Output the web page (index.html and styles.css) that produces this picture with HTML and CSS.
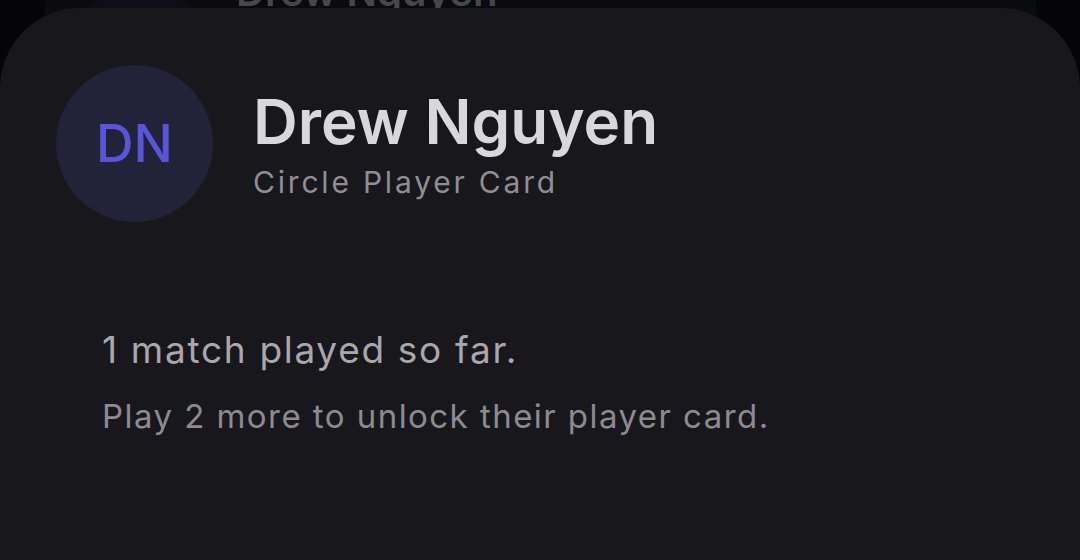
FILE: index.html
```html
<!DOCTYPE html>
<html>
<head>
<meta charset="utf-8">
<link rel="stylesheet" href="styles.css">
</head>
<body>
<div class="screen">
  <div class="behind">
    <div class="behind-row">
      <div class="behind-avatar"></div>
      <div class="behind-name">Drew Nguyen</div>
    </div>
  </div>
  <div class="sheet">
    <div class="header">
      <div class="avatar">DN</div>
      <div class="titles">
        <div class="name">Drew Nguyen</div>
        <div class="sub">Circle Player Card</div>
      </div>
    </div>
    <div class="body">
      <div class="played">1 match played so far.</div>
      <div class="hint">Play 2 more to unlock their player card.</div>
    </div>
  </div>
</div>
</body>
</html>
```
FILE: styles.css
```css
html, body {
  margin: 0;
  padding: 0;
  background: #050507;
  font-family: Inter, "Noto Sans", sans-serif;
}
.screen {
  position: relative;
  width: 1080px;
  height: 560px;
  overflow: hidden;
}
.behind {
  position: absolute;
  left: 45px;
  right: 44px;
  top: 0;
  height: 60px;
  background: #0a0b0d;
  overflow: hidden;
}
.behind-row {
  display: flex;
  align-items: flex-start;
  padding-left: 23px;
}
.behind-avatar {
  width: 144px;
  height: 144px;
  margin-top: -12px;
  border-radius: 50%;
  background: #0e0e19;
  flex-shrink: 0;
}
.behind-name {
  margin-left: 24px;
  margin-top: -32px;
  font-size: 40px;
  line-height: 48px;
  font-weight: 600;
  color: #47474b;
  white-space: nowrap;
}
.sheet {
  position: absolute;
  left: 0;
  right: 0;
  top: 8px;
  bottom: 0;
  background: #18171c;
  border-radius: 80px 80px 0 0;
  padding: 57px 56px 0 56px;
}
.header {
  display: flex;
  align-items: center;
}
.avatar {
  width: 157px;
  height: 157px;
  border-radius: 50%;
  background: #222238;
  color: #5a55d8;
  font-size: 52px;
  font-weight: 500;
  display: flex;
  align-items: center;
  justify-content: center;
  flex-shrink: 0;
}
.titles {
  margin-left: 40px;
  margin-top: -2px;
}
.name {
  font-size: 62px;
  font-weight: 600;
  color: #d8d8db;
  line-height: 74px;
}
.sub {
  margin-top: 5px;
  font-size: 30px;
  color: #8e8e93;
  letter-spacing: 2.8px;
  line-height: 36px;
}
.body {
  padding: 106px 0 0 46px;
}
.played {
  font-size: 37px;
  color: #a8a8ac;
  letter-spacing: 1.7px;
  line-height: 44px;
}
.hint {
  margin-top: 24px;
  font-size: 33px;
  color: #8b8b90;
  letter-spacing: 1.45px;
  line-height: 40px;
}
```
